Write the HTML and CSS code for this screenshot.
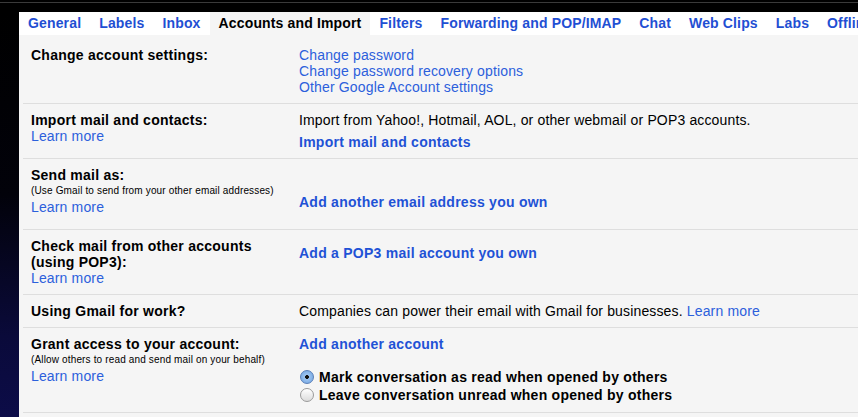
FILE: index.html
```html
<!DOCTYPE html>
<html>
<head>
<meta charset="utf-8">
<link rel="stylesheet" href="styles.css">
</head>
<body>
<div class="topbar"><div class="topline"></div></div>
<div class="main">
  <div class="side"></div>
  <div class="panel">
    <nav class="tabs">
      <a class="tab">General</a>
      <a class="tab">Labels</a>
      <a class="tab">Inbox</a>
      <span class="tab active">Accounts and Import</span>
      <a class="tab">Filters</a>
      <a class="tab">Forwarding and POP/IMAP</a>
      <a class="tab">Chat</a>
      <a class="tab">Web Clips</a>
      <a class="tab">Labs</a>
      <a class="tab">Offline</a>
    </nav>
    <div class="content">
      <div class="row">
        <div class="label"><b>Change account settings:</b></div>
        <div class="value">
          <a class="link">Change password</a><br>
          <a class="link">Change password recovery options</a><br>
          <a class="link">Other Google Account settings</a>
        </div>
      </div>
      <div class="row">
        <div class="label"><b>Import mail and contacts:</b><a class="link">Learn more</a></div>
        <div class="value">
          <div>Import from Yahoo!, Hotmail, AOL, or other webmail or POP3 accounts.</div>
          <div class="action gap6"><a class="blink">Import mail and contacts</a></div>
        </div>
      </div>
      <div class="row tall">
        <div class="label"><b>Send mail as:</b><span class="small">(Use Gmail to send from your other email addresses)</span><a class="link">Learn more</a></div>
        <div class="value">
          <div class="action gap27"><a class="blink">Add another email address you own</a></div>
        </div>
      </div>
      <div class="row">
        <div class="label"><b>Check mail from other accounts<br>(using POP3):</b><a class="link">Learn more</a></div>
        <div class="value">
          <div class="action gap7"><a class="blink">Add a POP3 mail account you own</a></div>
        </div>
      </div>
      <div class="row">
        <div class="label"><b>Using Gmail for work?</b></div>
        <div class="value">Companies can power their email with Gmail for businesses. <a class="link">Learn more</a></div>
      </div>
      <div class="row">
        <div class="label"><b>Grant access to your account:</b><span class="small">(Allow others to read and send mail on your behalf)</span><a class="link">Learn more</a></div>
        <div class="value">
          <div class="action"><a class="blink">Add another account</a></div>
          <div class="radios">
            <label class="radio"><span class="dot on"></span>Mark conversation as read when opened by others</label>
            <label class="radio"><span class="dot"></span>Leave conversation unread when opened by others</label>
          </div>
        </div>
      </div>
    </div>
  </div>
</div>
</body>
</html>
```

FILE: styles.css
```css
html, body {
  margin: 0;
  padding: 0;
  background: #000;
  overflow: hidden;
  width: 858px;
  height: 417px;
}
body {
  font-family: "Liberation Sans", Arial, sans-serif;
  font-size: 14px;
  letter-spacing: 0.15px;
  color: #000;
}
b, .blink, .radio {
  letter-spacing: 0.25px;
}
.topbar {
  height: 12px;
  background: #000;
  padding-top: 2px;
  box-sizing: border-box;
}
.topline {
  height: 1px;
  background: #3a3a3a;
}
.main {
  display: flex;
  height: 405px;
}
.side {
  width: 19px;
  flex: none;
  background: linear-gradient(#000 0%, #02020a 45%, #0a0a3a 80%, #0c0c48 100%);
}
.panel {
  flex: 1;
  min-width: 0;
  overflow: hidden;
  background: #f5f5f5;
}
.tabs {
  display: flex;
  white-space: nowrap;
  background: #fff;
  height: 23px;
  line-height: 23px;
}
.tab {
  font-weight: bold;
  font-size: 14px;
  letter-spacing: 0.15px;
  color: #1f4fd3;
  padding: 0 9px;
  flex: none;
}
.tab.active {
  background: #f5f5f5;
  color: #000;
}
.content {
  padding: 4px 0 0 4px;
}
.row {
  display: flex;
  padding: 8px 0;
  border-bottom: 1px solid #dedede;
  line-height: 16px;
}
.row.tall {
  padding-bottom: 14px;
}
.label {
  width: 268px;
  flex: none;
  padding-left: 8px;
}
.value {
  flex: 1;
}
.link {
  color: #2c60dc;
}
.label .link,
.label b {
  display: block;
}
.blink {
  color: #1f52d6;
  font-weight: bold;
}
.small {
  display: block;
  font-size: 10px;
  line-height: 16px;
}
.gap6 { margin-top: 6px; }
.gap7 { margin-top: 7px; }
.gap27 { margin-top: 27px; }
.radios {
  margin-top: 16px;
  display: flex;
  flex-direction: column;
}
.radio {
  display: flex;
  align-items: center;
  font-weight: bold;
  height: 18px;
  line-height: 18px;
}
.dot {
  width: 12px;
  height: 12px;
  border-radius: 50%;
  border: 1px solid #9a9a9a;
  background: linear-gradient(#ffffff, #dcdcdc);
  margin: 0 5px 0 1px;
  flex: none;
}
.dot.on {
  border-color: #5a7fb8;
  background: radial-gradient(circle at 50% 50%, #111 0, #111 1.6px, #9ec4f0 2.2px, #6aa0e0 100%);
}
```
